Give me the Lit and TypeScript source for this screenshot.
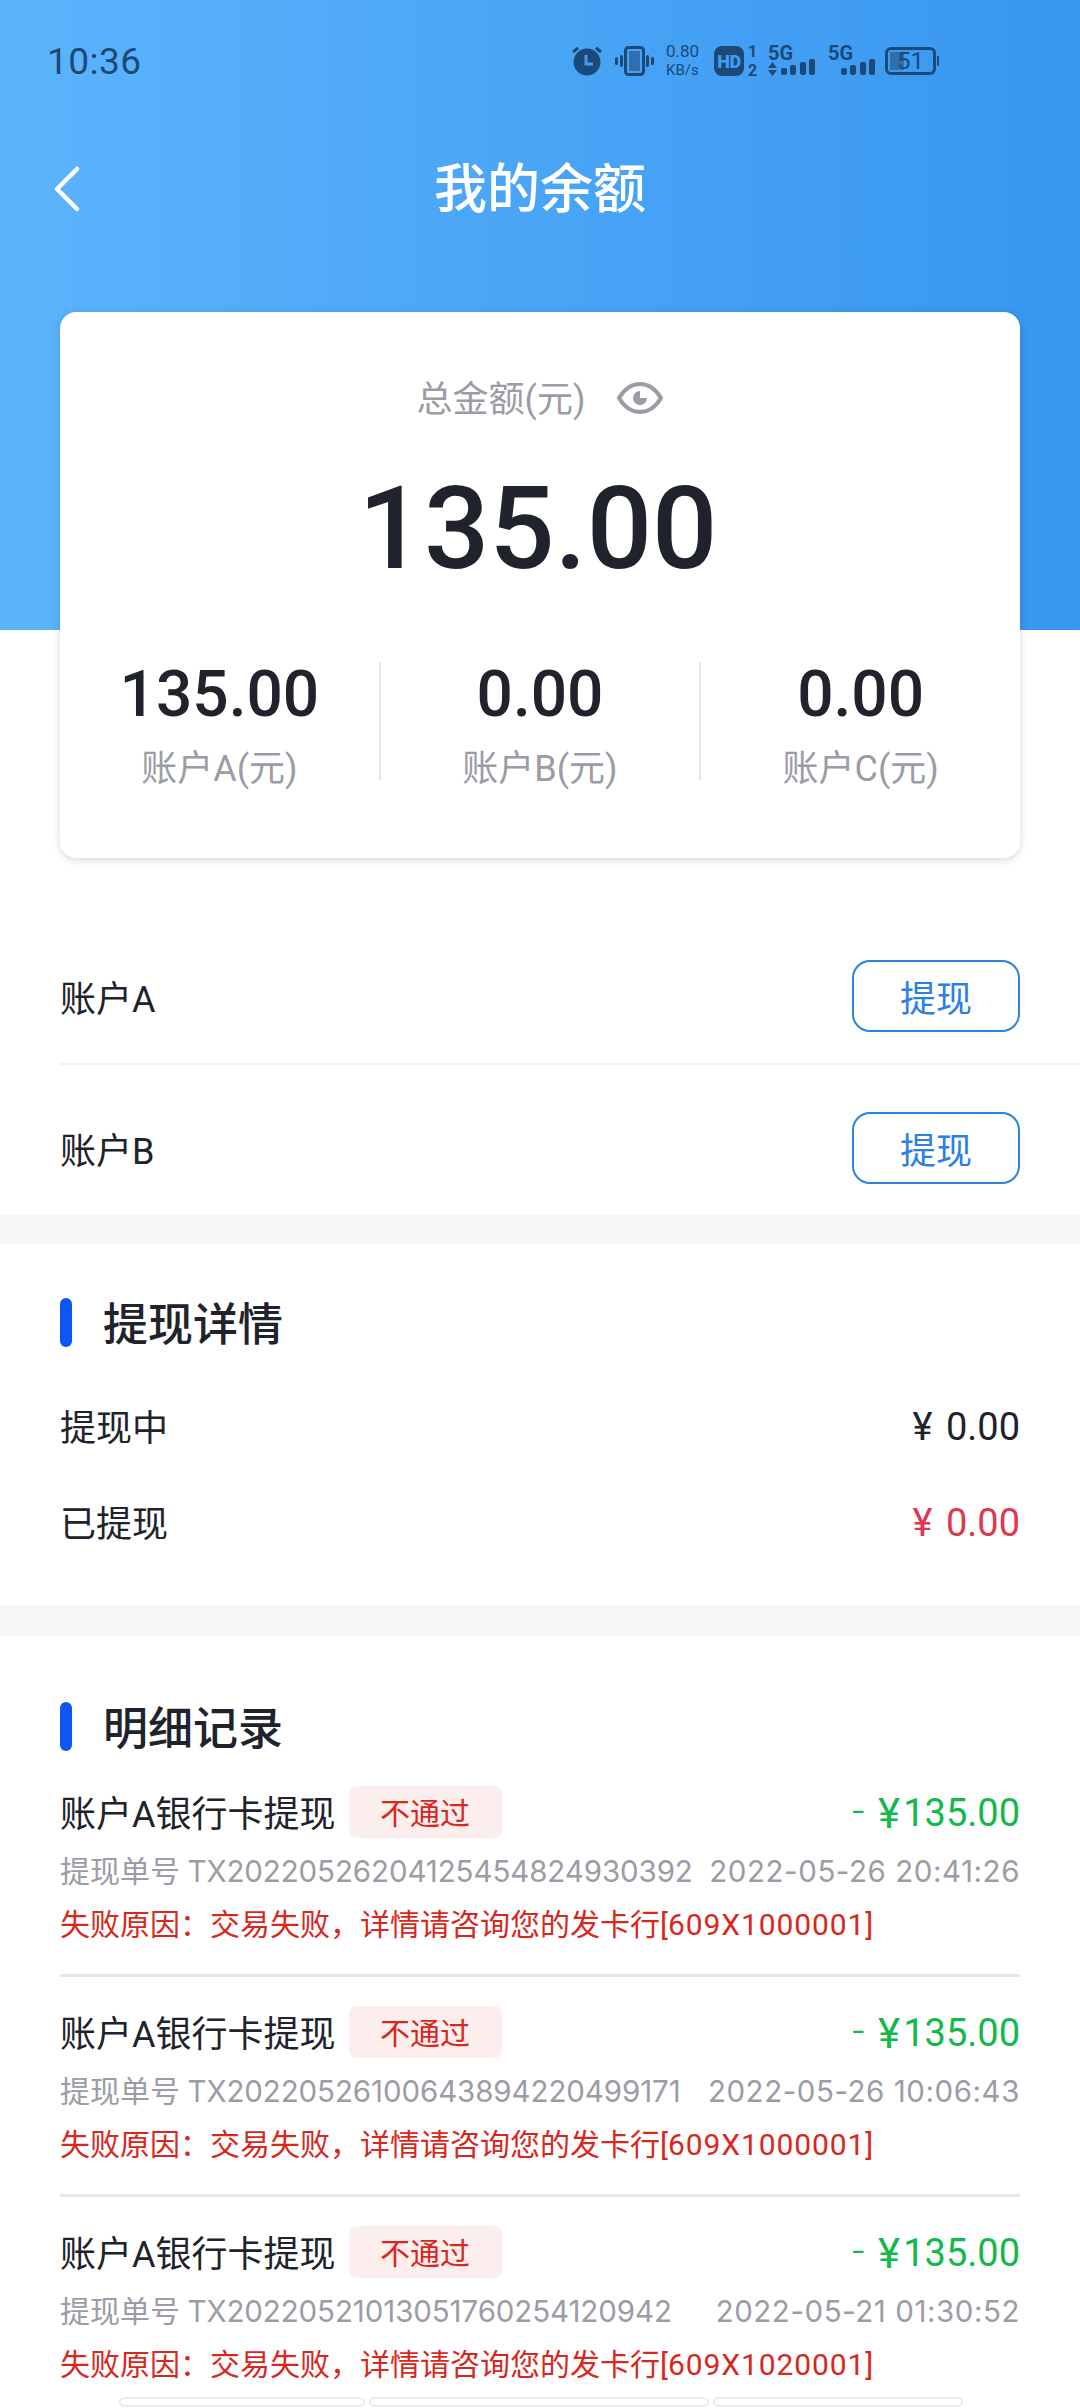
import { LitElement, html, css, svg } from 'lit';
import { customElement } from 'lit/decorators.js';

const records = [
  { no: 'TX20220526204125454824930392', time: '2022-05-26 20:41:26', reason: '609X1000001' },
  { no: 'TX20220526100643894220499171', time: '2022-05-26 10:06:43', reason: '609X1000001' },
  { no: 'TX20220521013051760254120942', time: '2022-05-21 01:30:52', reason: '609X1020001' },
];

// signal bars, the heights go up from left to right
const bars = svg`
  <rect x="13" y="22" width="6" height="7" rx="2"></rect>
  <rect x="22" y="19" width="6" height="10" rx="2"></rect>
  <rect x="32" y="16" width="6" height="13" rx="2"></rect>
  <rect x="41" y="13" width="6" height="16" rx="2"></rect>
`;

@customElement('app-root')
export class AppRoot extends LitElement {
  static styles = css`
    :host {
      display: block;
      width: 1080px;
      height: 2408px;
      overflow: hidden;
      background: #ffffff;
      font-family: Roboto, 'Noto Sans CJK SC', sans-serif;
      color: #20222c;
    }

    .top {
      background: linear-gradient(90deg, #5cb4fc 0%, #3796ef 100%) no-repeat top / 100% 630px;
    }

    .status {
      height: 122px;
      display: flex;
      align-items: center;
      padding: 0 141px 0 47px;
      color: #1c4a78;
    }

    .clock {
      font-size: 37px;
      letter-spacing: 0.5px;
    }

    .status-icons {
      margin-left: auto;
      display: flex;
      align-items: center;
      height: 30px;
    }

    .status-icons svg {
      display: block;
      fill: #1c4a78;
    }

    .speed {
      width: 40px;
      margin-left: 11px;
      display: flex;
      flex-direction: column;
      line-height: 19px;
      font-size: 17px;
    }

    .speed span + span {
      font-size: 15px;
    }

    .hd {
      width: 30px;
      height: 30px;
      margin-left: 8px;
      display: flex;
      align-items: center;
      justify-content: center;
      border-radius: 8px;
      background: #1c4a78;
      color: #3f9cf2;
      font-size: 18px;
      font-weight: 900;
      letter-spacing: -0.5px;
    }

    .sims {
      width: 14px;
      margin-left: 4px;
      display: flex;
      flex-direction: column;
      line-height: 19px;
      font-size: 16px;
      font-weight: 700;
    }

    .signal {
      position: relative;
      width: 48px;
      height: 30px;
      margin-left: 12px;
      font-size: 20px;
      line-height: 15px;
      font-weight: 700;
    }

    .signal svg {
      position: absolute;
      left: 0;
      top: 0;
    }

    .signal.first {
      margin-left: 6px;
    }

    .battery {
      box-sizing: border-box;
      position: relative;
      width: 51px;
      height: 28px;
      margin-left: 9px;
      display: flex;
      align-items: center;
      justify-content: center;
      border: 3px solid #1c4a78;
      border-radius: 6px;
      font-size: 24px;
      line-height: 22px;
    }

    .battery::before {
      content: '';
      position: absolute;
      left: 2px;
      top: 2px;
      bottom: 2px;
      width: 14px;
      background: #2f6fae;
    }

    .battery span {
      position: relative;
    }

    .nub {
      width: 2px;
      height: 10px;
      margin-left: 1px;
      border-radius: 1px;
      background: #1c4a78;
    }

    .nav {
      height: 132px;
      display: flex;
      align-items: center;
      justify-content: center;
      position: relative;
      color: #ffffff;
      font-size: 53px;
      font-weight: 500;
    }

    .nav span {
      padding-bottom: 6px;
    }

    .back {
      position: absolute;
      left: 52px;
      top: 43px;
      display: block;
    }

    .card {
      box-sizing: border-box;
      height: 546px;
      margin: 58px 60px 0;
      padding-top: 58px;
      background: #ffffff;
      border-radius: 16px;
      box-shadow: 0 2px 8px rgba(0, 0, 0, 0.16);
    }

    .total-label {
      height: 56px;
      display: flex;
      align-items: center;
      justify-content: center;
      gap: 32px;
      font-size: 36px;
      color: #9b9ca5;
    }

    .total-label span {
      padding-bottom: 5px;
    }

    .total {
      margin-top: 35px;
      padding-right: 4px;
      height: 136px;
      line-height: 136px;
      text-align: center;
      font-size: 115px;
      font-weight: 500;
      color: #20222c;
    }

    .stats {
      margin-top: 65px;
      display: grid;
      grid-template-columns: 1fr 2px 1fr 2px 1fr;
      align-items: start;
    }

    .stats i {
      display: block;
      height: 118px;
      background: #e6e6e8;
    }

    .stat {
      text-align: center;
    }

    .stat b {
      display: block;
      height: 66px;
      line-height: 66px;
      font-size: 64px;
      font-weight: 500;
    }

    .stat span {
      display: block;
      margin-top: 20px;
      height: 42px;
      line-height: 42px;
      font-size: 36px;
      color: #9b9ca5;
    }

    .account {
      margin-left: 60px;
      padding: 47px 60px 31px 0;
      display: flex;
      align-items: center;
      justify-content: space-between;
      font-size: 36px;
    }

    .account:first-child {
      padding-top: 102px;
      border-bottom: 2px solid #f2f2f2;
    }

    .btn {
      box-sizing: border-box;
      width: 168px;
      height: 72px;
      display: flex;
      align-items: center;
      justify-content: center;
      border: 2px solid #2a80e4;
      border-radius: 18px;
      color: #2a80e4;
      font-size: 36px;
    }

    .band {
      height: 29px;
      background: #f7f7f7;
    }

    .band.second {
      height: 31px;
    }

    .section {
      padding: 54px 60px 58px;
    }

    .section.records {
      padding: 66px 60px 0;
    }

    .heading {
      height: 49px;
      display: flex;
      align-items: center;
      gap: 31px;
      font-size: 45px;
      font-weight: 500;
    }

    .heading span {
      padding-bottom: 3px;
    }

    .heading::before {
      content: '';
      width: 12px;
      height: 49px;
      border-radius: 6px;
      background: #0f55f5;
    }

    .detail {
      margin-top: 48px;
      height: 48px;
      display: flex;
      align-items: center;
      justify-content: space-between;
      font-size: 36px;
    }

    .detail span:first-child {
      padding-bottom: 5px;
    }

    .detail span:last-child {
      font-size: 38px;
      word-spacing: 4px;
    }

    .yen {
      font-size: 42px;
    }

    .heading + .detail {
      margin-top: 56px;
    }

    .detail.paid span:last-child {
      color: #e0364f;
    }

    .record {
      padding-top: 29px;
      padding-bottom: 29px;
      border-bottom: 3px solid #e6e6e6;
    }

    .record:last-child {
      padding-bottom: 12px;
      border-bottom: 0;
    }

    .heading + .record {
      padding-top: 35px;
    }

    .record-head {
      height: 52px;
      display: flex;
      align-items: center;
      font-size: 36px;
    }

    .record-title {
      padding-bottom: 3px;
    }

    .badge {
      box-sizing: border-box;
      width: 153px;
      height: 52px;
      margin-left: 13px;
      padding-bottom: 3px;
      display: flex;
      align-items: center;
      justify-content: center;
      border-radius: 8px;
      background: #fdeeee;
      color: #d8271c;
      font-size: 30px;
    }

    .amount {
      margin-left: auto;
      padding-top: 2px;
      display: flex;
      align-items: center;
      color: #12b84a;
      font-size: 38px;
    }

    .amount .yen {
      margin-right: 3px;
    }

    .minus {
      width: 26px;
      padding-bottom: 4px;
      font-size: 44px;
      font-weight: 300;
    }

    .record-no {
      margin-top: 13px;
      height: 40px;
      line-height: 40px;
      display: flex;
      justify-content: space-between;
      font-size: 30px;
      color: #9b9ca5;
      white-space: nowrap;
    }

    /* Inter here because its narrow 1 gives the same uneven line ends */
    .record-no em {
      font-family: Inter, sans-serif;
      font-style: normal;
      font-size: 29.5px;
      letter-spacing: -0.1px;
    }

    .record-no .when {
      font-family: Inter, sans-serif;
      font-size: 29.5px;
      letter-spacing: 0.55px;
    }

    .reason {
      margin-top: 14px;
      height: 40px;
      line-height: 40px;
      font-size: 30px;
      color: #d8271c;
      white-space: nowrap;
    }

    .reason em {
      font-style: normal;
      letter-spacing: 0.9px;
    }

    .tabs {
      display: flex;
      gap: 4px;
      margin: 0 117px 0 119px;
    }

    .tabs div {
      height: 10px;
      box-sizing: border-box;
      border: 2px solid #ececec;
      border-radius: 5px;
      background: #ffffff;
    }
  `;

  renderStatus() {
    return html`
      <div class="status-icons">
        <svg width="32" height="32" viewBox="0 0 32 32">
          <circle cx="16" cy="17" r="13.5"></circle>
          <path d="M2 7 7 3M30 7l-5-4" stroke="#1c4a78" stroke-width="3" fill="none"></path>
          <path d="M15 10v9h7" stroke="#3f9cf2" stroke-width="3" fill="none"></path>
        </svg>
        <svg style="margin-left:12px" width="40" height="30" viewBox="0 0 40 30">
          <rect x="10.5" y="1.5" width="18" height="27" rx="3" fill="none" stroke="#1c4a78" stroke-width="3"></rect>
          <rect x="14" y="5" width="11" height="20" fill="#2f6fae"></rect>
          <rect x="5" y="9" width="3" height="12" rx="1.5"></rect>
          <rect x="0" y="11" width="3" height="8" rx="1.5"></rect>
          <rect x="31" y="9" width="3" height="12" rx="1.5"></rect>
          <rect x="36" y="11" width="3" height="8" rx="1.5"></rect>
        </svg>
        <div class="speed"><span>0.80</span><span>KB/s</span></div>
        <div class="hd">HD</div>
        <div class="sims"><span>1</span><span>2</span></div>
        <div class="signal first">
          5G
          <svg width="48" height="30" viewBox="0 0 48 30">
            <path d="M0 22 4.500 16 9 22zM0 24h9l-4.500 6z"></path>
            ${bars}
          </svg>
        </div>
        <div class="signal">
          5G
          <svg width="48" height="30" viewBox="0 0 48 30">${bars}</svg>
        </div>
        <div class="battery"><span>51</span></div>
        <div class="nub"></div>
      </div>
    `;
  }

  render() {
    return html`
      <div class="top">
        <div class="status">
          <span class="clock">10:36</span>
          ${this.renderStatus()}
        </div>
        <div class="nav">
          <svg class="back" width="30" height="48" viewBox="0 0 30 48" fill="none" stroke="#fff" stroke-width="4.500" stroke-linecap="round" stroke-linejoin="round">
            <path d="M25 4 5 24l20 20"></path>
          </svg>
          <span>我的余额</span>
        </div>
        <div class="card">
          <div class="total-label">
            <span>总金额(元)</span>
            <svg width="46" height="34" viewBox="0 0 46 34" fill="none" stroke="#9b9ca5" stroke-width="4">
              <path d="M2 17C8 7 15 3 23 3s15 4 21 14c-6 10-13 14-21 14S8 27 2 17z"></path>
              <path d="M23 10a7 7 0 1 0 7 7h-7z" fill="#9b9ca5" stroke="none"></path>
            </svg>
          </div>
          <div class="total">135.00</div>
          <div class="stats">
            <div class="stat"><b>135.00</b><span>账户A(元)</span></div>
            <i></i>
            <div class="stat"><b>0.00</b><span>账户B(元)</span></div>
            <i></i>
            <div class="stat"><b>0.00</b><span>账户C(元)</span></div>
          </div>
        </div>
      </div>

      <div>
        <div class="account"><span>账户A</span><div class="btn">提现</div></div>
        <div class="account"><span>账户B</span><div class="btn">提现</div></div>
      </div>

      <div class="band"></div>

      <div class="section">
        <div class="heading"><span>提现详情</span></div>
        <div class="detail"><span>提现中</span><span><span class="yen">¥</span> 0.00</span></div>
        <div class="detail paid"><span>已提现</span><span><span class="yen">¥</span> 0.00</span></div>
      </div>

      <div class="band second"></div>

      <div class="section records">
        <div class="heading"><span>明细记录</span></div>
        ${records.map(
          (r) => html`
            <div class="record">
              <div class="record-head">
                <span class="record-title">账户A银行卡提现</span>
                <span class="badge">不通过</span>
                <span class="amount"><span class="minus">-</span><span class="yen">¥</span>135.00</span>
              </div>
              <div class="record-no">
                <span>提现单号 <em>${r.no}</em></span>
                <span class="when">${r.time}</span>
              </div>
              <div class="reason">失败原因：交易失败，详情请咨询您的发卡行[<em>${r.reason}</em>]</div>
            </div>
          `
        )}
      </div>

      <div class="tabs">
        <div style="width:247px"></div>
        <div style="width:342px"></div>
        <div style="width:252px"></div>
      </div>
    `;
  }
}
